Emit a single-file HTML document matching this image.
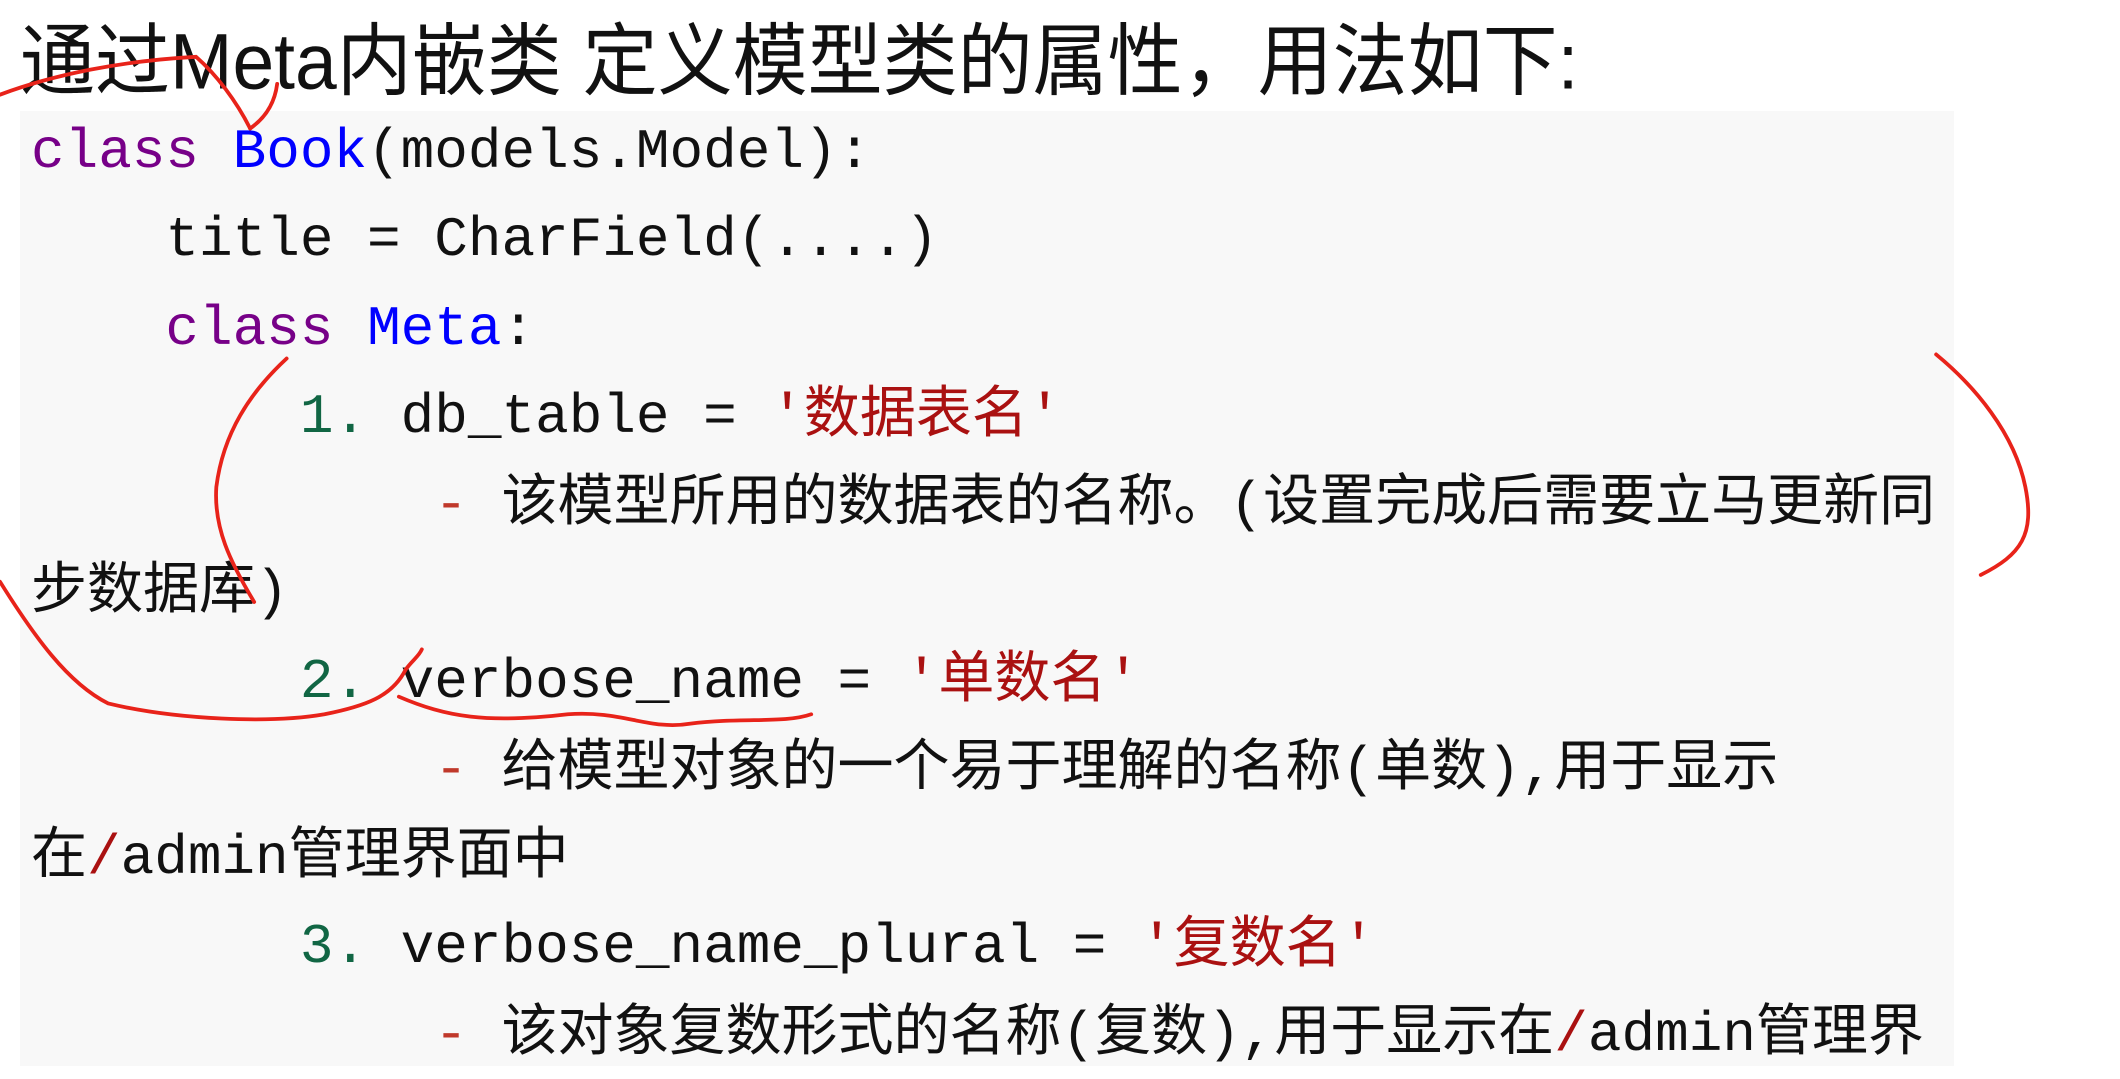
<!DOCTYPE html>
<html><head><meta charset="utf-8"><style>
html,body{margin:0;padding:0;width:2120px;height:1066px;overflow:hidden;background:#fff;}
.title{position:absolute;left:20px;top:12px;font-family:"Liberation Sans","Noto Sans CJK SC",sans-serif;font-size:75px;line-height:95px;color:#111;white-space:pre;transform:scaleY(1.05);transform-origin:0 0;}
.box{position:absolute;left:20px;top:111px;width:1934px;height:955px;background:#f8f8f8;}
pre{position:absolute;left:31px;top:108px;margin:0;font-family:"Liberation Mono","Noto Sans CJK SC",monospace;font-size:56px;line-height:88.3px;color:#111;white-space:pre;}
.k{color:#770088}.d{color:#0000ff}.n{color:#116644}.s{color:#aa1111}.r{color:#c0392b}
svg{position:absolute;left:0;top:0;}
</style></head><body>
<div class="title">通过Meta内嵌类 定义模型类的属性，用法如下:</div>
<div class="box"></div>
<pre><span class="k">class</span> <span class="d">Book</span>(models.Model):
    title = CharField(....)
    <span class="k">class</span> <span class="d">Meta</span>:
        <span class="n">1.</span> db_table = <span class="s">'数据表名'</span>
            <span class="r">-</span> 该模型所用的数据表的名称。(设置完成后需要立马更新同
步数据库)
        <span class="n">2.</span> verbose_name = <span class="s">'单数名'</span>
            <span class="r">-</span> 给模型对象的一个易于理解的名称(单数),用于显示
在<span class="s">/</span>admin管理界面中
        <span class="n">3.</span> verbose_name_plural = <span class="s">'复数名'</span>
            <span class="r">-</span> 该对象复数形式的名称(复数),用于显示在<span class="s">/</span>admin管理界</pre>
<svg width="2120" height="1066" viewBox="0 0 1568 788" preserveAspectRatio="none" fill="none" stroke="#e8231a" stroke-width="2.8" stroke-linecap="round">
<path d="M0,70 C40,55 90,45 145,42 C160,55 175,75 185,95"/>
<path d="M205,62 C203,78 195,88 185,95"/>
<path d="M212,265 C185,290 165,320 160,360 C158,390 170,415 188,445"/>
<path d="M0,430 C25,470 50,505 80,520 C130,532 200,535 240,528 C270,522 290,515 300,495 C305,488 310,485 312,480"/>
<path d="M295,515 C330,530 360,535 420,528 C460,525 480,540 510,535 C550,530 580,535 600,528"/>
<path d="M1432,262 C1460,285 1490,320 1498,360 C1505,395 1495,410 1465,425"/>
</svg>
</body></html>
